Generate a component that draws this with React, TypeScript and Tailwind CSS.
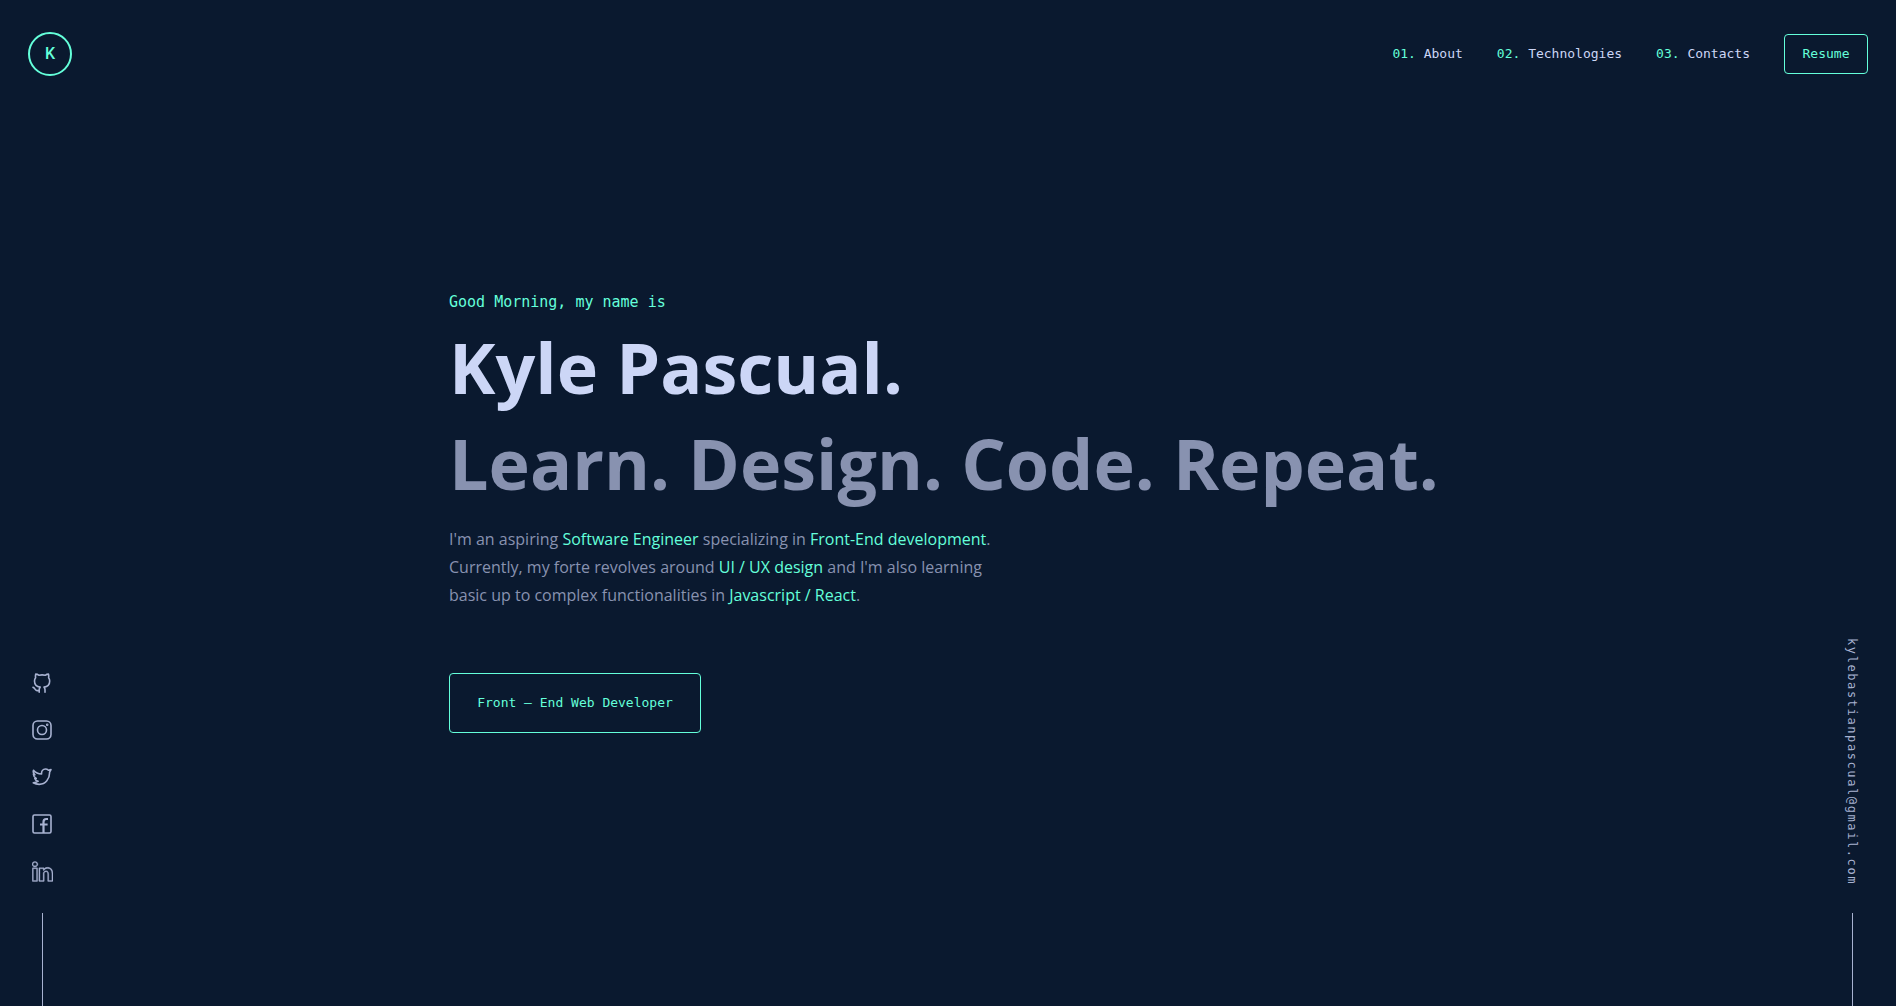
import React from "react";
import { SlSocialLinkedin } from "react-icons/sl";

const navItems = [
  { number: "01.", label: "About", href: "#about" },
  { number: "02.", label: "Technologies", href: "#technologies" },
  { number: "03.", label: "Contacts", href: "#contacts" },
];

function OutlineIcon({ children }: { children: React.ReactNode }) {
  return (
    <svg
      viewBox="0 0 20 20"
      fill="none"
      stroke="currentColor"
      strokeWidth="1.6"
      strokeLinecap="round"
      strokeLinejoin="round"
      className="size-5"
      aria-hidden="true"
    >
      {children}
    </svg>
  );
}

function GithubIcon() {
  return (
    <OutlineIcon>
      <path d="M7.2 19.2v-2.4c0-1.4.5-2.2 1-2.7-3-.3-5.7-1.7-5.7-6 0-1.3.4-2.5 1.1-3.4-.3-1.3-.2-2.5.1-3.6 1.2 0 2.4.5 3.4 1.2 2-.5 4-.5 6 0 1-.7 2.200-1.200 3.400-1.200.3 1.100.4 2.300.1 3.600.7.9 1.100 2.100 1.100 3.400 0 4.300-2.700 5.700-5.700 6 .5.5 1 1.300 1 2.700v2.400" />
      <path d="M1 14.400c1.900.3 1.800 3 4 3.200.8.100 1.500 0 2.200-.2" />
    </OutlineIcon>
  );
}

function InstagramIcon() {
  return (
    <OutlineIcon>
      <rect x="1" y="1" width="18" height="18" rx="4.500" />
      <circle cx="10" cy="10" r="4.500" />
      <circle cx="15.200" cy="4.800" r="0.5" />
    </OutlineIcon>
  );
}

function TwitterIcon() {
  return (
    <OutlineIcon>
      <path d="M1.500 3.200C3.500 5.600 6 6.900 9.600 7 9.200 4 11 2 13.400 2c1.300 0 2.300.5 3 1.200l2.600-.6-1.400 2.600C17.800 12 13.500 17.400 7.200 17.400c-2.200 0-4.300-.6-6-1.600 2 0 3.600-.5 5-1.600-1.700-.2-2.900-1.200-3.400-2.800h1.500C2.600 10.500 1.500 9.200 1.400 7.300l1.500.5C1.400 6.500.9 4.900 1.500 3.200z" />
    </OutlineIcon>
  );
}

function FacebookIcon() {
  return (
    <OutlineIcon>
      <rect x="1" y="1" width="18" height="18" rx="1.500" />
      <path strokeWidth="2.200" strokeLinecap="butt" d="M11.500 19V8c0-2 1-3 2.800-3H16M8 10.500h7.600" />
    </OutlineIcon>
  );
}

function LinkedinIcon() {
  return <SlSocialLinkedin size={21} stroke="currentColor" strokeWidth={16} aria-hidden="true" />;
}

const socials = [
  { label: "GitHub", Icon: GithubIcon },
  { label: "Instagram", Icon: InstagramIcon },
  { label: "Twitter", Icon: TwitterIcon },
  { label: "Facebook", Icon: FacebookIcon },
  { label: "LinkedIn", Icon: LinkedinIcon },
];

function Header() {
  return (
    <header className="flex items-center justify-between px-7 pt-8">
      <a
        href="#home"
        className="flex size-11 items-center justify-center rounded-full border-2 border-[#64ffda] font-['Roboto',sans-serif] text-base font-medium text-[#64ffda]"
      >
        K
      </a>
      <nav className="flex items-center gap-[34px] font-['DejaVu_Sans_Mono',monospace] text-[13px]">
        {navItems.map((item) => (
          <a key={item.href} href={item.href} className="text-[#ccd6f6]">
            <span className="text-[#64ffda]">{item.number}</span> {item.label}
          </a>
        ))}
        <button type="button" className="h-10 w-[84px] rounded border border-[#64ffda] text-[#64ffda]">
          Resume
        </button>
      </nav>
    </header>
  );
}

function Accent({ children }: { children: React.ReactNode }) {
  return <span className="font-medium text-[#64ffda]">{children}</span>;
}

function Hero() {
  return (
    <main className="mx-auto w-full max-w-[998px] pt-[214px] font-['Open_Sans',sans-serif]">
      <p className="font-['DejaVu_Sans_Mono',monospace] text-[15px] leading-6 text-[#64ffda]">
        Good Morning, my name is
      </p>
      <h1 className="mt-[5px] text-[70px] leading-[96px] font-bold text-[#ccd6f6]">Kyle Pascual.</h1>
      <h2 className="text-[70px] leading-[96px] font-bold text-[#8892b0]">Learn. Design. Code. Repeat.</h2>
      <p className="mt-[14px] max-w-[560px] text-base leading-7 text-[#8892b0]">
        I'm an aspiring <Accent>Software Engineer</Accent> specializing in <Accent>Front-End development</Accent>.
        Currently, my forte revolves around <Accent>UI / UX design</Accent> and I'm also learning basic up to complex
        functionalities in <Accent>Javascript / React</Accent>.
      </p>
      <button
        type="button"
        className="mt-16 h-[60px] w-[252px] rounded border border-[#64ffda] font-['DejaVu_Sans_Mono',monospace] text-[13px] text-[#64ffda]"
      >
        Front – End Web Developer
      </button>
    </main>
  );
}

export default function App() {
  return (
    <div className="flex min-h-screen flex-col bg-[#0a192f]">
      <Header />
      <div className="flex grow">
        <aside className="flex w-[84px] shrink-0 flex-col items-center justify-end gap-[27px] text-[#a8b2d1]">
          {socials.map(({ label, Icon }) => (
            <a key={label} href={"#" + label.toLowerCase()} aria-label={label}>
              <Icon />
            </a>
          ))}
          <div className="mt-1 h-[93px] w-px bg-[#a8b2d1]" />
        </aside>
        <Hero />
        <aside className="flex w-[84px] shrink-0 flex-col items-center justify-end gap-7 pr-1 text-[#a8b2d1]">
          <a
            href="mailto:kylebastianpascual@gmail.com"
            className="font-['DejaVu_Sans_Mono',monospace] text-xs tracking-[0.1rem] [writing-mode:vertical-rl]"
          >
            kylebastianpascual@gmail.com
          </a>
          <div className="h-[93px] w-px bg-[#a8b2d1]" />
        </aside>
      </div>
    </div>
  );
}
